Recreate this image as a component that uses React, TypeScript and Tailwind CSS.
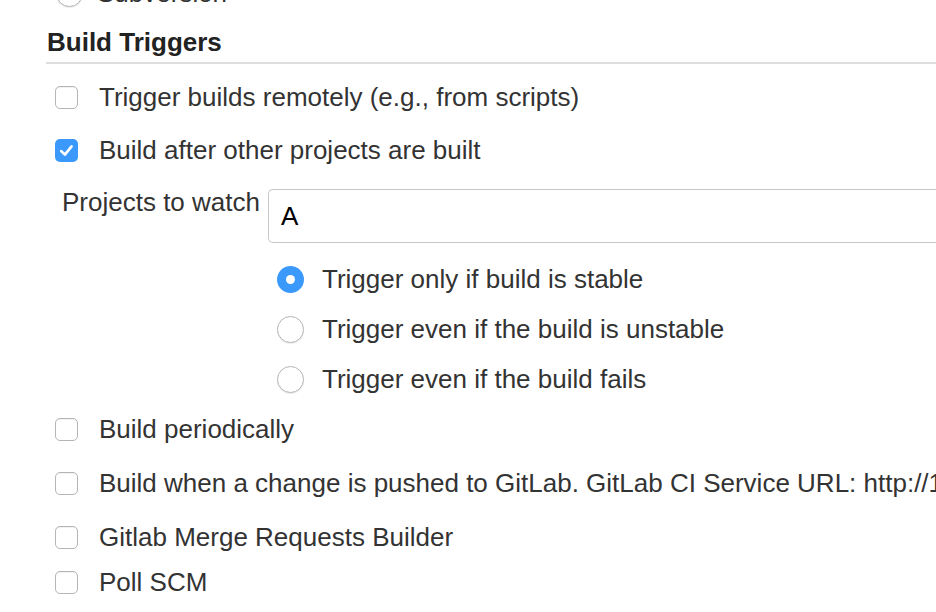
import { useState } from "react";

const FONT = { fontFamily: '"Liberation Sans", Arial, Helvetica, sans-serif' };

function Box({ checked }: { checked?: boolean }) {
  if (checked) {
    return (
      <span className="flex h-[23px] w-[23px] shrink-0 items-center justify-center rounded-[5px] bg-[#3b99fc]">
        <svg width="17" height="17" viewBox="0 0 16 16" fill="none">
          <path d="M3 8.6 L6.5 11.8 L12.8 4.2" stroke="#fff" strokeWidth="2.5" strokeLinecap="round" strokeLinejoin="round" />
        </svg>
      </span>
    );
  }
  return <span className="block h-[23px] w-[23px] shrink-0 rounded-[5px] border border-[#b5b5b5] bg-white shadow-[inset_0_1px_1px_rgba(0,0,0,0.06)]" />;
}

function Radio({ checked }: { checked?: boolean }) {
  if (checked) {
    return (
      <span className="flex h-[27px] w-[27px] shrink-0 items-center justify-center rounded-full bg-[#3b99fc]">
        <span className="block h-[9px] w-[9px] rounded-full bg-white" />
      </span>
    );
  }
  return <span className="block h-[27px] w-[27px] shrink-0 rounded-full border border-[#b5b5b5] bg-white shadow-[0_1px_1px_rgba(0,0,0,0.08)]" />;
}

function CheckRow({ label, checked, h }: { label: string; checked?: boolean; h: string }) {
  return (
    <div className={`flex items-center gap-[21px] pl-[55px] ${h}`}>
      <Box checked={checked} />
      <span className="whitespace-nowrap">{label}</span>
    </div>
  );
}

function RadioRow({ label, checked }: { label: string; checked?: boolean }) {
  return (
    <div className="flex h-[50px] items-center gap-[18px] pl-[277px]">
      <Radio checked={checked} />
      <span className="whitespace-nowrap">{label}</span>
    </div>
  );
}

export default function App() {
  const [watch] = useState("A");
  return (
    <div className="h-[612px] w-[936px] overflow-hidden bg-white text-[26px] leading-none text-[#333]" style={FONT}>
      {/* tail of the SCM section above */}
      <div className="-mt-[22px] flex h-[30px] items-center gap-[14px] pl-[56px]">
        <Radio />
        <span>Subversion</span>
      </div>

      <div className="pl-[46px] pt-[20px]">
        <h2 className="pl-px text-[26px] font-bold leading-[28px] text-[#222]">Build Triggers</h2>
        <div className="mt-[6px] h-[2px] bg-[#ddd]" />
      </div>

      <CheckRow h="h-[66px]" label="Trigger builds remotely (e.g., from scripts)" />
      <CheckRow h="h-[40px]" label="Build after other projects are built" checked />

      <div className="mt-[19px] flex pl-[62px]">
        <span className="whitespace-nowrap">Projects to watch</span>
        <div className="ml-[8px] flex h-[54px] flex-1 items-center rounded-l-[5px] border border-r-0 border-[#c8c8c8] pl-[12px] text-black">
          {watch}
        </div>
      </div>

      <div className="mt-[11px]">
        <RadioRow label="Trigger only if build is stable" checked />
        <RadioRow label="Trigger even if the build is unstable" />
        <RadioRow label="Trigger even if the build fails" />
      </div>

      <CheckRow h="h-[50px]" label="Build periodically" />
      <CheckRow h="h-[58px]" label="Build when a change is pushed to GitLab. GitLab CI Service URL: http://1" />
      <CheckRow h="h-[50px]" label="Gitlab Merge Requests Builder" />
      <CheckRow h="h-[40px]" label="Poll SCM" />
    </div>
  );
}
